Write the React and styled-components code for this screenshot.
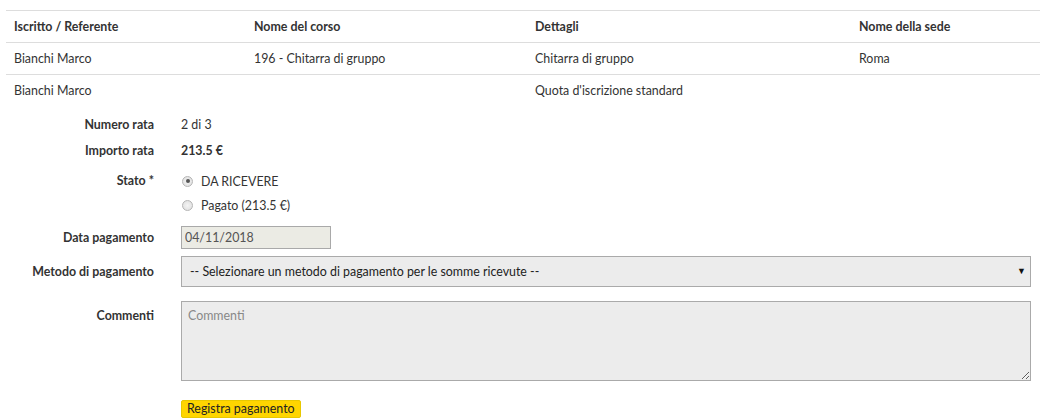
import React from "react";
import styled, { createGlobalStyle } from "styled-components";

const GlobalStyle = createGlobalStyle`
  body {
    margin: 0;
    background: #fff;
    font-family: Lato, "Open Sans", sans-serif;
    font-size: 12.4px;
    color: #333;
  }
`;

const Page = styled.div`
  padding: 10px 6px 0 6px;
  width: 1046px;
  box-sizing: border-box;
`;

const Table = styled.table`
  width: 100%;
  border-collapse: collapse;
  border-top: 1px solid #ddd;
`;

const Th = styled.th`
  text-align: left;
  font-weight: 700;
  padding: 0 8px;
  height: 31px;
  width: ${(p) => p.w || "auto"};
  border-bottom: 1px solid #ddd;
`;

const Td = styled.td`
  padding: 0 8px;
  height: 31px;
  border-bottom: ${(p) => (p.last ? "none" : "1px solid #ddd")};
`;

const Form = styled.div`
  display: flex;
  flex-direction: column;
  padding-top: 5px;
`;

const Row = styled.div`
  display: flex;
  align-items: ${(p) => p.align || "center"};
  gap: 27px;
  min-height: 26px;
  margin-top: ${(p) => p.mt || 0}px;
`;

const Label = styled.div`
  width: 148px;
  flex: none;
  text-align: right;
  font-weight: 700;
  padding-top: ${(p) => p.pt || 0}px;
`;

const Value = styled.div`
  flex: 1;
  font-weight: ${(p) => (p.bold ? 700 : 400)};
`;

const RadioList = styled.div`
  display: flex;
  flex-direction: column;
`;

const RadioRow = styled.label`
  display: flex;
  align-items: center;
  height: 24px;
  gap: 8px;
  padding-left: 1px;
`;

const RadioDot = styled.span`
  width: 11px;
  height: 11px;
  border-radius: 50%;
  border: 1px solid #b5b5b5;
  background: radial-gradient(circle, #f4f4f4 0%, #dcdcdc 100%);
  box-sizing: border-box;
  display: flex;
  align-items: center;
  justify-content: center;
  &::after {
    content: "";
    width: 4px;
    height: 4px;
    border-radius: 50%;
    background: ${(p) => (p.checked ? "#555" : "transparent")};
  }
`;

const DateInput = styled.input`
  width: 150px;
  height: 23px;
  box-sizing: border-box;
  border: 1px solid #a9a9a9;
  background: #ebebe4;
  font-family: inherit;
  font-size: 12.4px;
  color: #545454;
  padding: 0 3px;
  outline: none;
`;

const SelectWrap = styled.div`
  position: relative;
  width: 850px;
`;

const Select = styled.select`
  appearance: none;
  width: 100%;
  height: 31px;
  box-sizing: border-box;
  border: 1px solid #aaa;
  background: #ececec;
  font-family: inherit;
  font-size: 12.4px;
  color: #222;
  padding: 0 8px;
  outline: none;
`;

const Caret = styled.span`
  position: absolute;
  right: 5px;
  top: 9px;
  font-size: 9px;
  color: #111;
  pointer-events: none;
`;

const TextArea = styled.textarea`
  width: 850px;
  height: 80px;
  box-sizing: border-box;
  border: 1px solid #aaa;
  background: #ececec;
  font-family: inherit;
  font-size: 12.4px;
  padding: 6px 6px;
  outline: none;
  display: block;
  &::placeholder {
    color: #888;
  }
`;

const Button = styled.button`
  background: #ffd500;
  border: 1px solid #e8c800;
  border-radius: 2px;
  font-family: inherit;
  font-size: 12.4px;
  color: #222;
  height: 18px;
  padding: 0 5px;
  line-height: 16px;
  cursor: pointer;
`;

const App = () => {
  return (
    <Page>
      <GlobalStyle />
      <Table>
        <thead>
          <tr>
            <Th w="224px">Iscritto / Referente</Th>
            <Th w="265px">Nome del corso</Th>
            <Th w="308px">Dettagli</Th>
            <Th>Nome della sede</Th>
          </tr>
        </thead>
        <tbody>
          <tr>
            <Td>Bianchi Marco</Td>
            <Td>196 - Chitarra di gruppo</Td>
            <Td>Chitarra di gruppo</Td>
            <Td>Roma</Td>
          </tr>
          <tr>
            <Td last>Bianchi Marco</Td>
            <Td last></Td>
            <Td last>Quota d'iscrizione standard</Td>
            <Td last></Td>
          </tr>
        </tbody>
      </Table>
      <Form>
        <Row>
          <Label>Numero rata</Label>
          <Value>2 di 3</Value>
        </Row>
        <Row>
          <Label>Importo rata</Label>
          <Value bold>213.5 €</Value>
        </Row>
        <Row align="flex-start" mt={6}>
          <Label pt={4}>Stato *</Label>
          <RadioList>
            <RadioRow>
              <RadioDot checked />
              DA RICEVERE
            </RadioRow>
            <RadioRow>
              <RadioDot />
              Pagato (213.5 €)
            </RadioRow>
          </RadioList>
        </Row>
        <Row mt={7}>
          <Label>Data pagamento</Label>
          <DateInput defaultValue="04/11/2018" readOnly />
        </Row>
        <Row mt={6}>
          <Label>Metodo di pagamento</Label>
          <SelectWrap>
            <Select defaultValue="">
              <option value="">
                -- Selezionare un metodo di pagamento per le somme ricevute --
              </option>
            </Select>
            <Caret>▼</Caret>
          </SelectWrap>
        </Row>
        <Row align="flex-start" mt={14}>
          <Label pt={7}>Commenti</Label>
          <TextArea placeholder="Commenti" />
        </Row>
        <Row mt={15}>
          <Label />
          <Button>Registra pagamento</Button>
        </Row>
      </Form>
    </Page>
  );
};

export default App;
